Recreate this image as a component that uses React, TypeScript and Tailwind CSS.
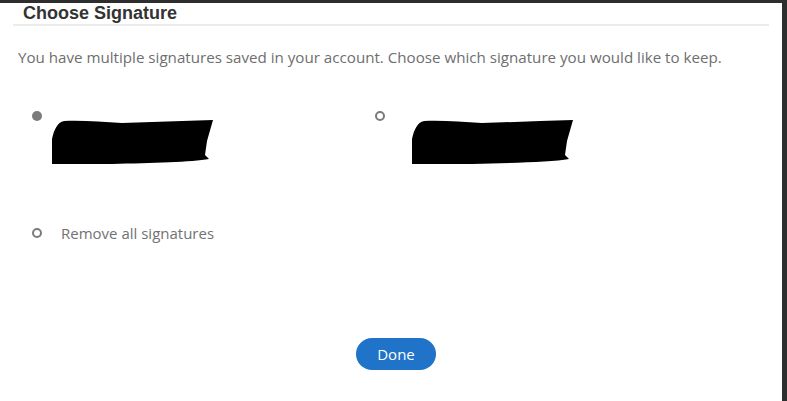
import React, { useState } from "react";

function Blob() {
  return (
    <svg width="162" height="46" viewBox="0 0 162 46" className="block">
      <path
        d="M0 20 C2 10 6 3 12 2 C30 1 50 3 70 4 C100 3 130 2 161 1 L155 22 L153 36 L157 40 C140 43 100 44 60 45 L0 45 Z"
        fill="#000"
      />
    </svg>
  );
}

function Radio({ checked }: { checked: boolean }) {
  return checked ? (
    <span className="block h-[10px] w-[10px] rounded-full bg-[#7b7b7b]" />
  ) : (
    <span className="block h-[10px] w-[10px] rounded-full border-2 border-[#7b7b7b]" />
  );
}

export default function App() {
  const [choice, setChoice] = useState<"a" | "b" | "none">("a");

  return (
    <div className="h-[401px] w-[787px] overflow-hidden bg-[#2e2e2e] pt-[3px]">
      <div
        className="h-[398px] w-[782px] bg-white"
        style={{ fontFamily: '"Open Sans", "Noto Sans", sans-serif' }}
      >
        <div className="mx-[13px] border-b-2 border-[#ebebeb] pb-[1px]">
          <h1
            className="pl-[10px] text-[18px] font-bold leading-[20px] text-[#333333]"
            style={{ fontFamily: '"Liberation Sans", Arial, sans-serif' }}
          >
            Choose Signature
          </h1>
        </div>

        <p className="mt-[21px] pl-[18px] text-[15.15px] leading-[20px] text-[#6e6e6e]">
          You have multiple signatures saved in your account. Choose which signature you would like to keep.
        </p>

        <div className="mt-[43px] flex pl-[32px]">
          <button className="flex w-[343px] items-start text-left" onClick={() => setChoice("a")}>
            <span className="mt-[1px]">
              <Radio checked={choice === "a"} />
            </span>
            <span className="ml-[10px] mt-[9px]">
              <Blob />
            </span>
          </button>
          <button className="flex items-start text-left" onClick={() => setChoice("b")}>
            <span className="mt-[1px]">
              <Radio checked={choice === "b"} />
            </span>
            <span className="ml-[27px] mt-[9px]">
              <Blob />
            </span>
          </button>
        </div>

        <button className="mt-[58px] flex items-center pl-[32px]" onClick={() => setChoice("none")}>
          <Radio checked={choice === "none"} />
          <span className="ml-[19px] text-[15px] leading-[20px] text-[#727272]">Remove all signatures</span>
        </button>

        <div className="mt-[95px] flex justify-center">
          <button className="ml-[10px] h-[32px] w-[80px] rounded-full bg-[#1f73c9] text-[15px] text-white">
            Done
          </button>
        </div>
      </div>
    </div>
  );
}
